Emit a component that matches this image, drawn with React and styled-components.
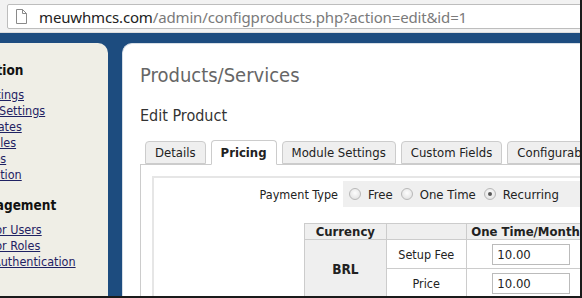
import styled, { createGlobalStyle } from "styled-components";

const GlobalStyle = createGlobalStyle`
  html, body {
    margin: 0;
    padding: 0;
    background: #fff;
    overflow: hidden;
  }
  * {
    box-sizing: border-box;
  }
`;

const UI_FONT = `"DejaVu Sans Condensed", "DejaVu Sans", Tahoma, sans-serif`;

const sideSections = [
  {
    title: "Configuration",
    links: [
      "General Settings",
      "Automation Settings",
      "Email Templates",
      "Addon Modules",
      "Client Groups",
      "Fraud Protection",
    ],
  },
  {
    title: "Staff Management",
    links: [
      "Administrator Users",
      "Administrator Roles",
      "Two-Factor Authentication",
    ],
  },
  { title: "Payments", links: [] },
];

const tabs = [
  "Details",
  "Pricing",
  "Module Settings",
  "Custom Fields",
  "Configurable Options",
];

function FileIcon() {
  return (
    <svg width="12" height="15" viewBox="0 0 12 15">
      <path
        d="M1.5 0.5 H7.5 L11.5 4.5 V14.5 H1.5 Z"
        fill="#fff"
        stroke="#8a8a8a"
        strokeWidth="1"
      />
      <path d="M7.5 0.5 V4.5 H11.5" fill="none" stroke="#8a8a8a" strokeWidth="1" />
    </svg>
  );
}

function App() {
  return (
    <>
      <GlobalStyle />
      <Frame>
        <AddressBar>
          <UrlBox>
            <FileIcon />
            <Url>
              <Host>meuwhmcs.com</Host>/admin/configproducts.php?action=edit&amp;id=1
            </Url>
          </UrlBox>
        </AddressBar>
        <Body>
          <Sidebar>
            <SideInner>
              {sideSections.map((s) => (
                <SideSection key={s.title}>
                  <SideTitle>{s.title}</SideTitle>
                  {s.links.map((l) => (
                    <SideLink key={l} href="#">
                      {l}
                    </SideLink>
                  ))}
                </SideSection>
              ))}
            </SideInner>
          </Sidebar>
          <Main>
            <PageTitle>Products/Services</PageTitle>
            <SubTitle>Edit Product</SubTitle>
            <Tabs>
              {tabs.map((t) => (
                <Tab key={t} $active={t === "Pricing"}>
                  {t}
                </Tab>
              ))}
            </Tabs>
            <TabBox>
              <FieldBox>
                <FormRow>
                  <FieldLabel>Payment Type</FieldLabel>
                  <FieldCell>
                    <RadioOption>
                      <Radio />
                      Free
                    </RadioOption>
                    <RadioOption>
                      <Radio />
                      One Time
                    </RadioOption>
                    <RadioOption>
                      <Radio $checked />
                      Recurring
                    </RadioOption>
                  </FieldCell>
                </FormRow>
                <PriceTable>
                  <thead>
                    <tr>
                      <Th $w={82}>Currency</Th>
                      <Th $w={81}></Th>
                      <Th $w={130}>One Time/Monthly</Th>
                      <Th $w={130}>Quarterly</Th>
                    </tr>
                  </thead>
                  <tbody>
                    <tr>
                      <CurrencyCell rowSpan={2}>BRL</CurrencyCell>
                      <LabelCell>Setup Fee</LabelCell>
                      <InputCell>
                        <PriceInput defaultValue="10.00" />
                      </InputCell>
                      <InputCell>
                        <PriceInput defaultValue="0.00" />
                      </InputCell>
                    </tr>
                    <tr>
                      <LabelCell>Price</LabelCell>
                      <InputCell>
                        <PriceInput defaultValue="10.00" />
                      </InputCell>
                      <InputCell>
                        <PriceInput defaultValue="-1.00" />
                      </InputCell>
                    </tr>
                  </tbody>
                </PriceTable>
              </FieldBox>
            </TabBox>
          </Main>
        </Body>
      </Frame>
    </>
  );
}

const Frame = styled.div`
  width: 582px;
  height: 298px;
  overflow: hidden;
  display: flex;
  flex-direction: column;
  border-right: 2px solid #1a1a1a;
  border-bottom: 2px solid #1a1a1a;
  background: #1d4c7f;
`;

const AddressBar = styled.div`
  height: 33px;
  flex-shrink: 0;
  background: #f2f2f2;
  padding: 4px 0 4px 7px;
  border-bottom: 1px solid #dcdcdc;
`;

const UrlBox = styled.div`
  height: 25px;
  margin-right: -4px;
  background: #fff;
  border: 1px solid #bdbdbd;
  border-radius: 2px;
  display: flex;
  align-items: center;
  gap: 12px;
  padding-left: 7px;
`;

const Url = styled.span`
  font-family: "Noto Sans", "Open Sans", sans-serif;
  font-size: 15px;
  color: #7a7a7a;
  white-space: nowrap;
  letter-spacing: -0.15px;
`;

const Host = styled.span`
  color: #222;
`;

const Body = styled.div`
  flex: 1;
  min-height: 0;
  display: flex;
  gap: 14px;
  padding-top: 10px;
  background: #1d4c7f;
`;

const Sidebar = styled.div`
  width: 108px;
  flex-shrink: 0;
  background: #efeee6;
  border-top-right-radius: 10px;
  overflow: hidden;
`;

const SideInner = styled.div`
  margin-left: -70px;
  padding-top: 19px;
  font-family: ${UI_FONT};
  white-space: nowrap;
`;

const SideSection = styled.div`
  display: flex;
  flex-direction: column;
  margin-bottom: 14px;
`;

const SideTitle = styled.div`
  font-size: 13.5px;
  font-weight: bold;
  color: #111;
  line-height: 16px;
  margin-bottom: 9px;
`;

const SideLink = styled.a`
  font-size: 12.5px;
  line-height: 16px;
  color: #1f2263;
  text-decoration: underline;
`;

const Main = styled.div`
  flex: 1;
  min-width: 0;
  background: #fff;
  border-top-left-radius: 10px;
  border: 1px solid #d6dee6;
  border-right: none;
  border-bottom: none;
  overflow: hidden;
  padding-left: 17px;
  font-family: ${UI_FONT};
`;

const PageTitle = styled.h1`
  margin: 19px 0 0;
  font-size: 20px;
  font-weight: normal;
  line-height: 24px;
  color: #666;
`;

const SubTitle = styled.h2`
  margin: 19px 0 0;
  font-size: 16px;
  font-weight: normal;
  line-height: 20px;
  color: #333;
`;

const Tabs = styled.div`
  display: flex;
  align-items: flex-end;
  gap: 5px;
  margin-top: 14px;
  padding-left: 5px;
  white-space: nowrap;
  position: relative;
  z-index: 1;
`;

const Tab = styled.div`
  flex-shrink: 0;
  height: ${(p) => (p.$active ? "25px" : "23px")};
  margin-bottom: ${(p) => (p.$active ? "-1px" : "0")};
  padding: 0 9px;
  display: flex;
  align-items: center;
  font-size: 13px;
  font-weight: ${(p) => (p.$active ? "bold" : "normal")};
  color: #222;
  background: ${(p) => (p.$active ? "#fff" : "#efefef")};
  border: 1px solid #cccccc;
  border-bottom: ${(p) => (p.$active ? "1px solid #fff" : "1px solid #cccccc")};
  border-radius: 4px 4px 0 0;
`;

const TabBox = styled.div`
  width: 600px;
  border: 1px solid #cccccc;
  padding: 11px;
`;

const FieldBox = styled.div`
  border: 2px solid #e6e6e6;
  padding: 3px 0 20px;
`;

const FormRow = styled.div`
  display: flex;
  height: 26px;
`;

const FieldLabel = styled.div`
  width: 189px;
  flex-shrink: 0;
  padding-right: 5px;
  display: flex;
  align-items: center;
  justify-content: flex-end;
  font-size: 12.5px;
  color: #222;
`;

const FieldCell = styled.div`
  flex: 1;
  background: #efefef;
  display: flex;
  align-items: center;
  gap: 8px;
  padding-left: 6px;
  font-size: 13px;
  color: #222;
`;

const RadioOption = styled.label`
  display: flex;
  align-items: center;
  gap: 7px;
`;

const Radio = styled.span`
  width: 12px;
  height: 12px;
  border-radius: 50%;
  border: 1px solid #b8b8b8;
  background: radial-gradient(circle at 50% 40%, #fdfdfd, #dcdcdc);
  display: flex;
  align-items: center;
  justify-content: center;
  &::after {
    content: "";
    width: 4px;
    height: 4px;
    border-radius: 50%;
    background: ${(p) => (p.$checked ? "#555" : "transparent")};
  }
`;

const PriceTable = styled.table`
  margin: 16px 0 0 150px;
  border-collapse: collapse;
  font-size: 12.5px;
  color: #222;
  table-layout: fixed;
`;

const Th = styled.th`
  width: ${(p) => p.$w}px;
  height: 16px;
  padding: 0;
  background: #efefef;
  border: 1px solid #cccccc;
  font-weight: bold;
  font-size: 13px;
  white-space: nowrap;
`;

const CurrencyCell = styled.td`
  background: #efefef;
  border: 1px solid #cccccc;
  text-align: center;
  font-weight: bold;
  font-size: 13.5px;
`;

const LabelCell = styled.td`
  height: 29px;
  border: 1px solid #cccccc;
  text-align: center;
`;

const InputCell = styled.td`
  border: 1px solid #cccccc;
  text-align: center;
`;

const PriceInput = styled.input`
  width: 78px;
  height: 21px;
  border: 1px solid #bbbbbb;
  padding: 0 4px;
  font-family: ${UI_FONT};
  font-size: 13px;
  color: #222;
`;

export default App;
